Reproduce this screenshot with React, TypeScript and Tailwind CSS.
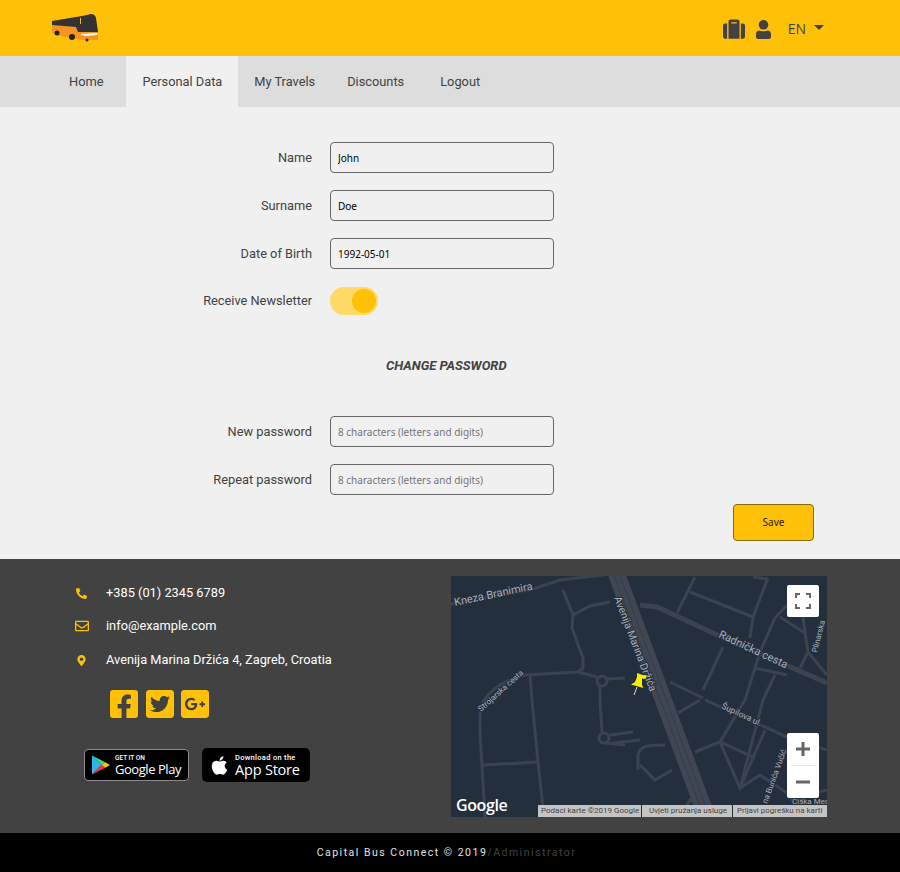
import { FaSuitcase, FaPhone, FaRegEnvelope, FaMapMarkerAlt, FaFacebookSquare, FaTwitterSquare, FaGooglePlusSquare, FaApple } from 'react-icons/fa'

const thinRoads = [
  'M451 604L475 600L530 590L560 580L603 575',
  'M563 590L573 615L572 628L583 658L583 668L578 672L525 675C505 680 490 690 483 702L480 715L480 733L485 817',
  'M483 765L538 762',
  'M530 675L532 700L538 762L544 817',
  'M578 672L597 677',
  'M600 686L600 700L602 732',
  'M607 679L625 678',
  'M573 615L590 606L610 602',
  'M610 735L633 732',
  'M613 743L640 740',
  'M606 743L625 745',
  'M695 577L677 613',
  'M690 592L753 617',
  'M768 578L753 617L750 638',
  'M753 577L768 579',
  'M723 647L703 690',
  'M787 605L775 618L760 652L745 700L720 742',
  'M780 617L805 633L808 652L800 668',
  'M803 617L805 633',
  'M755 668L787 675',
  'M775 675L763 700L740 788',
  'M670 682L703 698',
  'M705 700L787 737L827 750',
  'M695 752L720 742L755 758',
  'M720 742L740 788L765 730',
  'M700 700L678 713',
  'M640 765L655 780L672 770',
  'M740 788L760 775L790 795',
  'M638 770V755C640 745 650 745 665 745',
  'M808 652L827 675',
  'M790 800L827 790',
  'M680 817L690 800L700 805',
]

function MapPanel() {
  return (
    <div className="relative w-[376px] h-[241px] overflow-hidden bg-[#242f3e]">
      <svg width="376" height="241" viewBox="451 576 376 241" className="block" style={{ fontFamily: 'Roboto, sans-serif' }}>
        <g fill="none" stroke="#3a4350" strokeWidth="3">
          {thinRoads.map((d) => (
            <path key={d} d={d} />
          ))}
          <circle cx="602" cy="681" r="5" />
          <circle cx="604" cy="738" r="5" />
        </g>
        <path d="M640 605L657 607L713 633L827 683" fill="none" stroke="#3a4350" strokeWidth="5" />
        <path d="M615 570L708 820" fill="none" stroke="#3f4753" strokeWidth="17" />
        <path d="M612 570L705 820M618 570L711 820" fill="none" stroke="#343d4a" strokeWidth="1" />
        <g fill="#a9b0b9" stroke="#242f3e" strokeWidth="2" paintOrder="stroke">
          <text transform="translate(455 606) rotate(-12)" fontSize="11">Kneza Branimira</text>
          <text transform="translate(614 598) rotate(69)" fontSize="10.5">Avenija Marina Držića</text>
          <text transform="translate(718 637) rotate(25)" fontSize="11">Radnička cesta</text>
          <text transform="translate(721 708) rotate(25)" fontSize="8.5">Šupilova ul.</text>
          <text transform="translate(481 712) rotate(-42)" fontSize="8">Strojarska cesta</text>
          <text transform="translate(817 653) rotate(-76)" fontSize="8">Plinarska</text>
          <text transform="translate(767 804) rotate(-70)" fontSize="8">na Bunića Vučić</text>
          <text x="792" y="804" fontSize="8">Čiška Med</text>
        </g>
        <path d="M637 673L647 676.500L645 679L642 678.500L642 685L643.500 688L631 684.500L635 682L637 677Z" fill="#f5f000" />
        <path d="M637 687L634 695" stroke="#d8d8d8" strokeWidth="1" />
      </svg>

      <div className="absolute top-[9px] right-[8px] w-8 h-8 bg-white rounded-[2px] flex items-center justify-center">
        <svg width="16" height="16" viewBox="0 0 16 16" fill="none" stroke="#666" strokeWidth="2">
          <path d="M1 5V1H5M11 1H15V5M15 11V15H11M5 15H1V11" />
        </svg>
      </div>
      <div className="absolute bottom-[19px] right-[8px] w-8 h-[65px] bg-white rounded-[2px] flex flex-col items-center">
        <div className="h-8 flex items-center justify-center">
          <svg width="16" height="16" viewBox="0 0 16 16" fill="#666"><path d="M6.500 1h3v5.500H15v3H9.500V15h-3V9.500H1v-3h5.500z" /></svg>
        </div>
        <div className="w-6 h-px bg-[#e6e6e6]" />
        <div className="h-8 flex items-center justify-center">
          <svg width="16" height="16" viewBox="0 0 16 16" fill="#666"><path d="M1 6.500h14v3H1z" /></svg>
        </div>
      </div>
      <span className="absolute left-[5px] bottom-[2px] text-white text-[16px] font-semibold leading-[20px] font-['Open_Sans',sans-serif] tracking-[-0.4px]">Google</span>
      <div className="absolute bottom-0 right-0 h-3 flex gap-px text-[8px] leading-3 text-[#444] whitespace-nowrap">
        <span className="bg-[#c4c4c4] w-[103px] pl-[3px]">Podaci karte ©2019 Google</span>
        <span className="bg-[#c4c4c4] w-[90px] pl-[7px]">Uvjeti pružanja usluge</span>
        <span className="bg-[#c4c4c4] w-[94px] pl-1">Prijavi pogrešku na karti</span>
      </div>
    </div>
  )
}

function Field({ label, value, placeholder }: { label: string; value?: string; placeholder?: string }) {
  return (
    <div className="flex items-center h-[31px] mb-[17px]">
      <label className="w-[312px] text-right text-[12.8px] text-[#424242]">{label}</label>
      <input
        readOnly
        value={value}
        placeholder={placeholder}
        className="ml-[18px] w-[224px] h-[31px] border border-[#666] rounded-[4px] bg-transparent pl-[7px] pr-2 text-[10px] text-black placeholder:text-[#757575] font-['Noto_Sans',sans-serif] outline-none"
      />
    </div>
  )
}

function BusLogo() {
  return (
    <svg width="48" height="28" viewBox="0 0 48 28">
      <path d="M0 8L41 1L46 18L46 26L32 26L8 22L0 19Z" fill="#f7941d" />
      <path d="M0 7L30 2L39 0Q43 0 44 4L46 18L26 18L24 13L0 11Z" fill="#333333" />
      <path d="M28 20L46 19L45 21L33 22Z" fill="#ffffff" />
      <rect x="28" y="4" width="1" height="6" fill="#f7b21d" />
      <circle cx="5" cy="19" r="2.500" fill="#222" />
      <circle cx="20" cy="23" r="3" fill="#222" />
      <circle cx="35" cy="26" r="1.500" fill="#222" />
    </svg>
  )
}

function GoogleMark() {
  return (
    <svg width="18" height="20" viewBox="0 0 19 20">
      <path d="M0 0L10 10L0 20Z" fill="#2fb5ee" />
      <path d="M0 0L14 7L10 10Z" fill="#3ddc84" />
      <path d="M0 20L14 13L10 10Z" fill="#e8384f" />
      <path d="M14 7L19 10L14 13L10 10Z" fill="#fdc60a" />
    </svg>
  )
}

export default function App() {
  return (
    <div className="w-[900px] font-['Roboto',sans-serif]">
      {/* Header */}
      <header className="h-14 bg-[#ffc107] flex items-center pl-[52px] pr-[76px]">
        <BusLogo />
        <div className="ml-auto flex items-center text-[#424242] mt-[2px]">
          <FaSuitcase size={22} />
          <svg width="15" height="19" viewBox="0 0 15 19" fill="currentColor" className="ml-[11px]">
            <circle cx="7.500" cy="4.800" r="4.800" />
            <path d="M3 10.500C5 11.500 10 11.500 12 10.500C14 10.800 15 12.500 15 14.500V17C15 18.300 14 19 13 19H2C1 19 0 18.300 0 17V14.500C0 12.500 1 10.800 3 10.500Z" />
          </svg>
          <span className="ml-[17px] text-sm font-['Open_Sans',sans-serif]">EN</span>
          <span className="ml-[8px] mb-[3px] w-0 h-0 border-x-[5px] border-x-transparent border-t-[5px] border-t-[#424242]" />
        </div>
      </header>

      {/* Nav */}
      <nav className="h-[51px] bg-[#dddddd] flex items-stretch pl-[53px] text-[12.8px] text-[#424242]">
        <a className="px-4 flex items-center">Home</a>
        <a className="ml-[7px] px-4 flex items-center bg-[#f0f0f0]">Personal Data</a>
        <a className="px-4 flex items-center">My Travels</a>
        <a className="px-4 flex items-center">Discounts</a>
        <a className="ml-[4px] px-4 flex items-center">Logout</a>
      </nav>

      {/* Form */}
      <main className="h-[452px] bg-[#f0f0f0] pt-[35px]">
        <Field label="Name" value="John" />
        <Field label="Surname" value="Doe" />
        <Field label="Date of Birth" value="1992-05-01" />
        <div className="flex items-center h-7 mt-[18px]">
          <span className="w-[312px] text-right text-[12.8px] text-[#424242]">Receive Newsletter</span>
          <div className="ml-[18px] relative w-12 h-7 rounded-full bg-[#ffd966]">
            <div className="absolute right-[2px] top-[2px] w-6 h-6 rounded-full bg-[#ffc107]" />
          </div>
        </div>
        <h2 className="mt-[41px] h-[19px] pl-[386px] text-[13px] leading-[19px] font-bold italic text-[#424242]">CHANGE PASSWORD</h2>
        <div className="mt-[41px]">
          <Field label="New password" placeholder="8 characters (letters and digits)" />
          <Field label="Repeat password" placeholder="8 characters (letters and digits)" />
        </div>
        <div className="flex justify-end pr-[86px] mt-[-8px]">
          <button className="w-[81px] h-[37px] bg-[#ffc107] border border-[#8a6d0b] rounded-[4px] text-[10px] text-[#222] font-['Noto_Sans',sans-serif]">Save</button>
        </div>
      </main>

      {/* Footer */}
      <footer className="h-[274px] bg-[#424242] flex pt-[17px] pl-[75px]">
        <div className="w-[376px] text-[12.8px] text-white">
          <div className="flex items-center h-[20px] mt-[7px]">
            <div className="w-[31px]">
              <FaPhone size={11} className="text-[#ffc107] ml-[1px]" style={{ transform: 'scaleX(-1)' }} />
            </div>
            <span>+385 (01) 2345 6789</span>
          </div>
          <div className="flex items-center h-[20px] mt-[13px]">
            <div className="w-[31px]">
              <FaRegEnvelope size={14} className="text-[#ffc107]" />
            </div>
            <span>info@example.com</span>
          </div>
          <div className="flex items-center h-[20px] mt-[14px]">
            <div className="w-[31px]">
              <FaMapMarkerAlt size={11} className="text-[#ffc107] ml-[1px]" />
            </div>
            <span>Avenija Marina Držića 4, Zagreb, Croatia</span>
          </div>
          <div className="flex ml-[33px] mt-[18px] gap-[3.500px] text-[#ffc107]">
            <FaFacebookSquare size={32} />
            <FaTwitterSquare size={32} />
            <FaGooglePlusSquare size={32} />
          </div>
          <div className="flex items-center ml-[9px] mt-[28px] gap-[13px]">
            <div className="w-[105px] h-[32px] bg-black border border-[#8c8c8c] rounded-[4px] flex items-center pl-[7px] text-white whitespace-nowrap">
              <GoogleMark />
              <div className="ml-[5px] flex flex-col">
                <span className="text-[6.500px] leading-[8px] font-medium">GET IT ON</span>
                <span className="text-[13px] leading-[14px] tracking-[-0.45px] font-['Open_Sans',sans-serif]">Google Play</span>
              </div>
            </div>
            <div className="w-[108px] h-[34px] bg-black rounded-[5px] flex items-center pl-[7px] text-white whitespace-nowrap">
              <FaApple size={21} />
              <div className="ml-[5px] flex flex-col">
                <span className="text-[7.500px] leading-[9px] font-medium tracking-[0.3px]">Download on the</span>
                <span className="text-[14.500px] leading-[15px] font-['Open_Sans',sans-serif] tracking-[-0.2px]">App Store</span>
              </div>
            </div>
          </div>
        </div>
        <MapPanel />
      </footer>

      {/* Copyright */}
      <div className="h-[39px] bg-black flex items-center justify-center pr-[7px] text-[10.500px] tracking-[1.500px]">
        <span className="text-[#e0e0e0]">Capital Bus Connect © 2019</span>
        <span className="text-[#424242]">/Administrator</span>
      </div>
    </div>
  )
}
